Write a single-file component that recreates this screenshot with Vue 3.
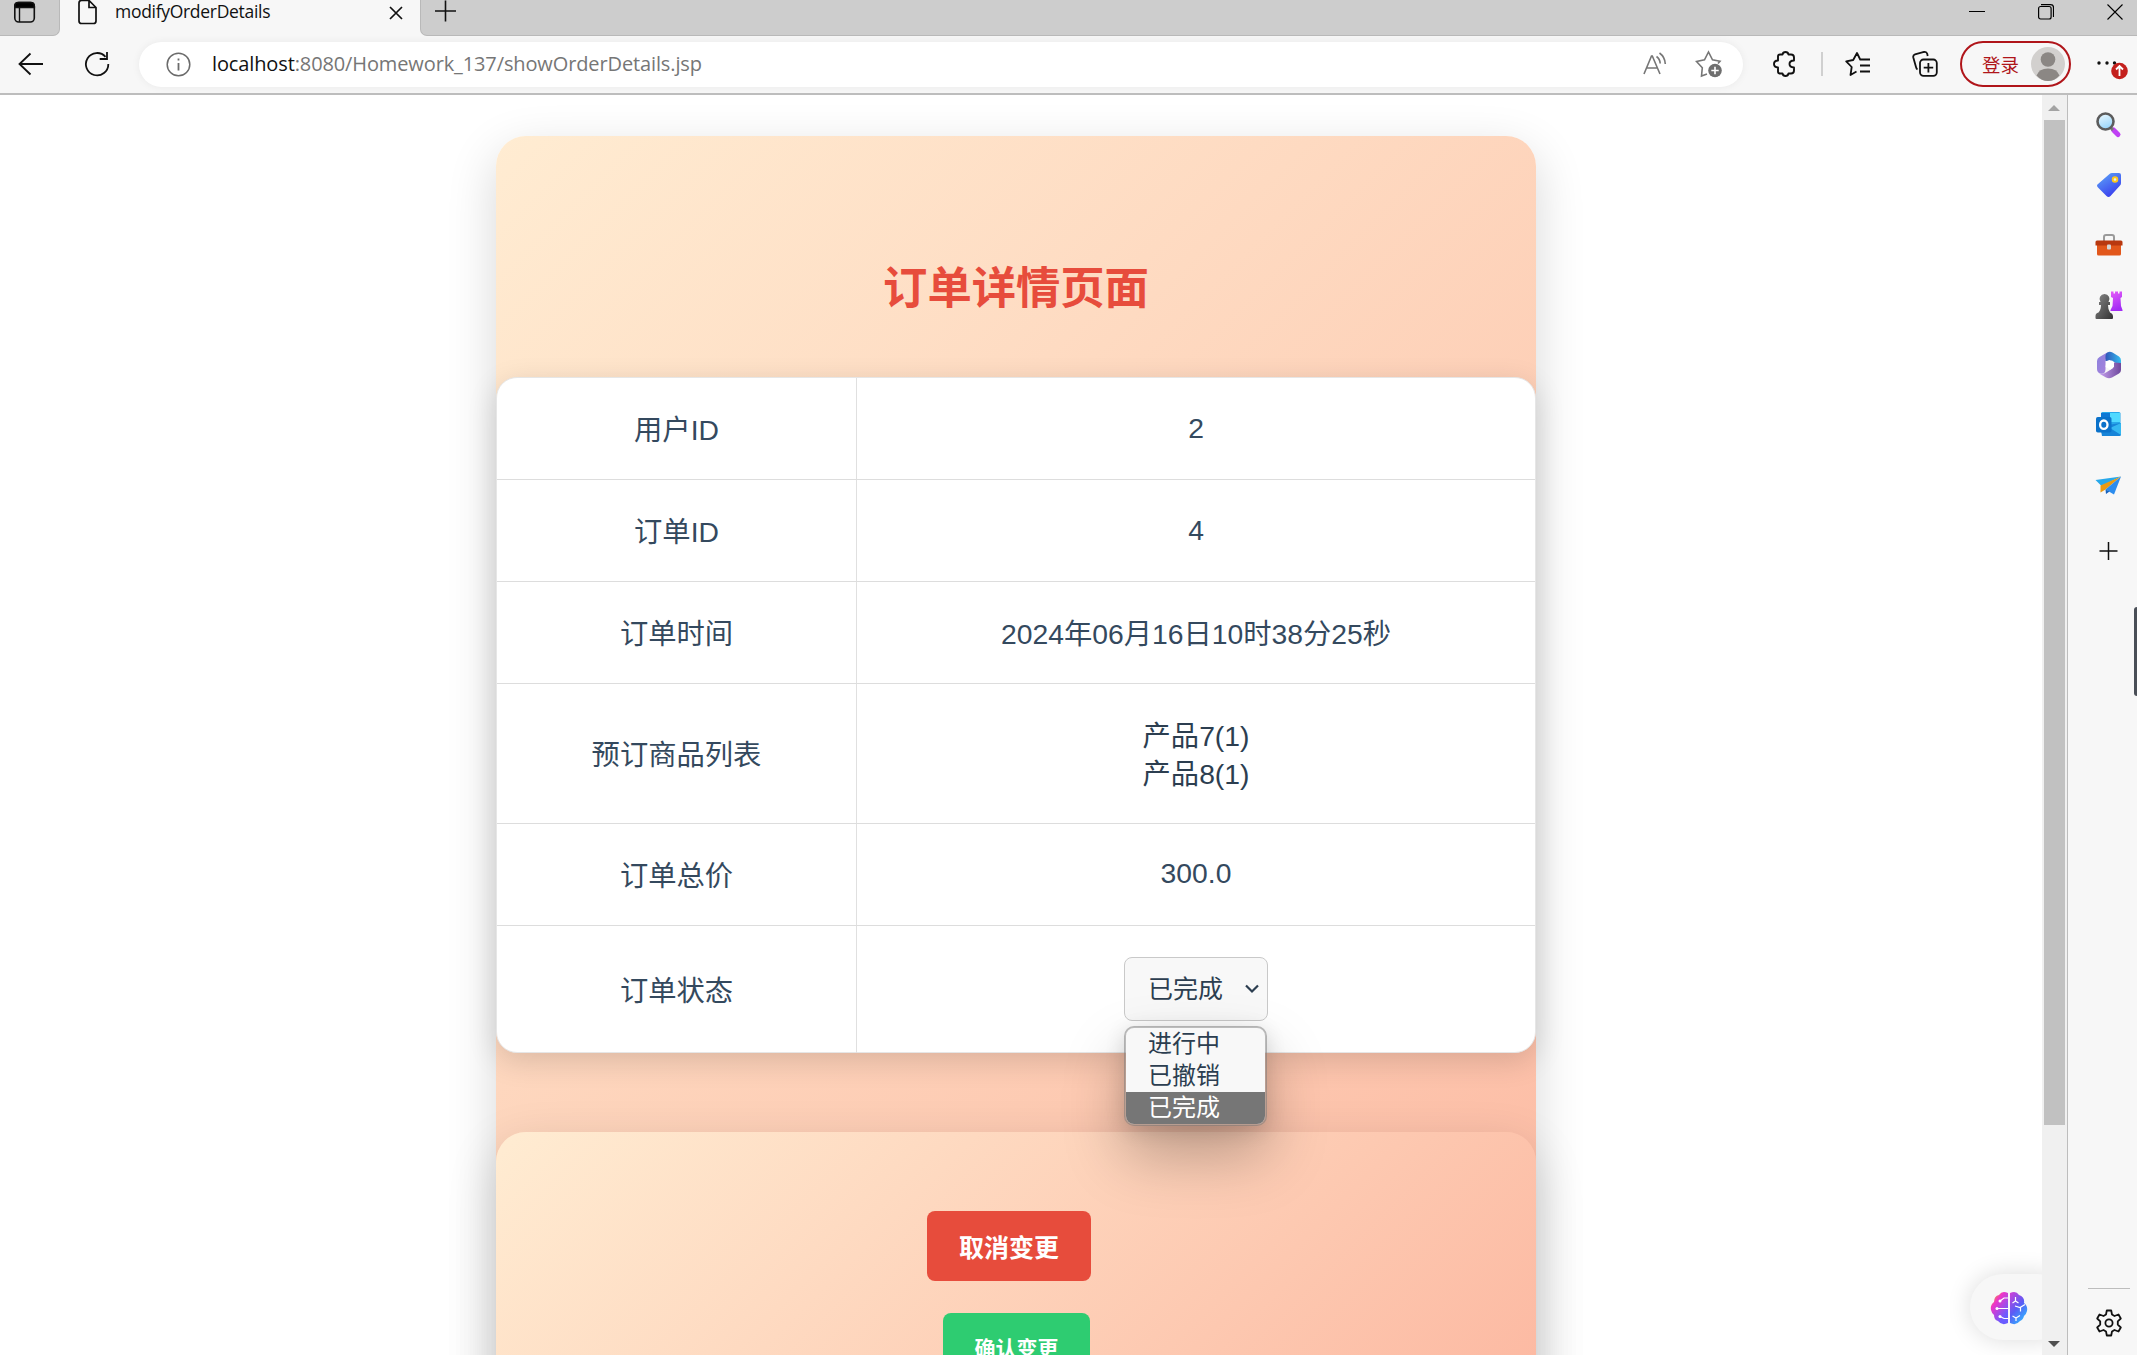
<script setup>
const rows = [
  { label: '用户ID', values: ['2'], kind: 'first num' },
  { label: '订单ID', values: ['4'], kind: 'num' },
  { label: '订单时间', values: ['2024年06月16日10时38分25秒'], kind: '' },
  { label: '预订商品列表', values: ['产品7(1)', '产品8(1)'], kind: 'goods' },
  { label: '订单总价', values: ['300.0'], kind: 'num' },
]
const options = ['进行中', '已撤销', '已完成']
const selected = '已完成'
</script>

<template>
  <div class="window">
    <header class="tabs">
      <div class="tab-menu">
        <svg width="24" height="26" viewBox="0 0 24 26" fill="none" stroke="#111" stroke-width="1.600"><rect x="1.800" y="2.500" width="19.500" height="19.500" rx="4" /><path d="M1.800 7.500V6q0-3.500 3.500-3.500h12.500q3.500 0 3.500 3.500v1.500z" fill="#000" /><path d="M6.500 8v14" stroke-width="1.400" /></svg>
      </div>
      <div class="tab">
        <svg class="doc" width="20" height="26" viewBox="0 0 20 26" fill="none" stroke="#111" stroke-width="1.700"><path d="M4 .5h7l7 7v13.500q0 2.500-2.500 2.500h-12Q1 23.500 1 21V3Q1 .5 3.500 .5zM11 .5v7h7" /></svg>
        <span class="tab-title">modifyOrderDetails</span>
        <svg class="close" width="14" height="14" viewBox="0 0 14 14" stroke="#111" stroke-width="1.700"><path d="M1 1l12 12M13 1L1 13" /></svg>
      </div>
      <svg class="new" width="22" height="22" viewBox="0 0 22 22" stroke="#111" stroke-width="1.600"><path d="M11 0.500v21M0.500 11h21" /></svg>
      <div class="controls">
        <svg width="16" height="16" viewBox="0 0 16 16" stroke="#000" stroke-width="1"><path d="M0 7.500h16" /></svg>
        <svg width="16" height="16" viewBox="0 0 16 16" fill="none" stroke="#000" stroke-width="1.200"><rect x="0.600" y="2.500" width="12.500" height="12.500" rx="2" /><path d="M3 .6h9.500q3 0 3 3V13" /></svg>
        <svg width="16" height="16" viewBox="0 0 16 16" stroke="#000" stroke-width="1.100"><path d="M.5 .5l15 15M15.500 .5l-15 15" /></svg>
      </div>
    </header>

    <div class="toolbar">
      <svg class="back" width="26" height="24" viewBox="0 0 26 24" fill="none" stroke="#111" stroke-width="1.800"><path d="M12.500 1.500L1.500 12l11 10.500M1.500 12H25" /></svg>
      <svg class="reload" width="26" height="26" viewBox="0 0 26 26" fill="none" stroke="#111" stroke-width="1.800"><path d="M21.500 5.800A11.200 11.200 0 1 0 24.300 13M23 1v7h-7.300" /></svg>
      <div class="address">
        <svg width="25" height="25" viewBox="0 0 25 25" fill="none" stroke="#6b6b6b" stroke-width="1.500"><circle cx="12.500" cy="12.500" r="11.300" /><path d="M12.500 11v7.500M12.500 6.500v2" stroke-width="1.800" /></svg>
        <span class="url"><b>localhost</b>:8080/Homework_137/showOrderDetails.jsp</span>
        <svg class="read" width="24" height="24" viewBox="0 0 24 24" fill="none" stroke="#767676" stroke-width="1.600"><path d="M1 22L8.500 4h.8L17 22M3.800 16h10.500M13.500 4.500q3.500 2.500 3.700 7M16.500 1q5.500 4 5.800 11" /></svg>
        <svg width="28" height="28" viewBox="0 0 28 28" fill="none" stroke="#767676" stroke-width="1.600"><path d="M12 24l-5.500 2 .8-8.200L1.500 11.500l8-1.600L13.500 2l4 7.900 7.500 1.400-2 2.300" /><circle cx="20" cy="20.500" r="6.800" fill="#6e6e6e" stroke="none" /><path d="M20 16.800v7.400M16.300 20.500h7.400" stroke="#fff" /></svg>
      </div>
      <svg class="puzzle" width="24" height="26" viewBox="0 0 24 26" fill="none" stroke="#111" stroke-width="1.900" stroke-linejoin="round"><path d="M5 5.500q0-2 2-2h2.500Q10 1 12.500 1t3 2.500H18q3 0 3 3V9.500q-4.500.2-4.500 3.500t4.500 3.500v3q0 3-3 3h-2.500Q15 25 12.500 25t-3-2.500H7q-2 0-2-2V16.500q-4-.2-4-3.500t4-3.500z" /></svg>
      <i class="sep"></i>
      <svg class="fav" width="26" height="26" viewBox="0 0 26 26" fill="none" stroke="#111" stroke-width="1.800" stroke-linejoin="round"><path d="M11.500 20.500L5.500 24l1.200-8L1.200 10.300l7-1.300L12 2l3.200 6.500H25M15 14.500h10M15 20.500h10" /></svg>
      <svg class="coll" width="26" height="26" viewBox="0 0 26 26" fill="none" stroke="#111" stroke-width="1.800"><path d="M5.500 18.500q-1-.5-1.500-2.500L1.300 6.500Q.8 4 3 3.300L12 1q2.500-.5 3.200 1.800l.5 2.200" /><rect x="8" y="8.500" width="16.800" height="16.300" rx="3.500" /><path d="M16.400 12v9.500M11.700 16.700h9.500" /></svg>
      <div class="login">
        <span>登录</span>
        <svg width="34" height="34" viewBox="0 0 34 34"><circle cx="17" cy="17" r="17" fill="#d2d0ce" /><circle cx="17" cy="12.500" r="7.300" fill="#8b8784" /><path d="M5.500 28.500q2.500-7 11.500-7t11.500 7Q23.500 34 17 34T5.500 28.500z" fill="#8b8784" /></svg>
      </div>
      <svg class="more" width="32" height="28" viewBox="0 0 32 28"><g fill="#111"><circle cx="3" cy="9" r="1.700" /><circle cx="11" cy="9" r="1.700" /><circle cx="18.500" cy="9" r="1.700" /></g><circle cx="23.500" cy="17" r="8.300" fill="#c4201d" /><path d="M23.500 22v-9.500M20 15.500l3.500-3.500 3.500 3.500" fill="none" stroke="#fff" stroke-width="1.800" /></svg>
    </div>

    <div class="body">
      <main class="page">
        <section class="card outer">
          <h1>订单详情页面</h1>
          <div class="table">
            <div v-for="r in rows" :key="r.label" class="row" :class="r.kind">
              <div class="cell label">{{ r.label }}</div>
              <div class="cell value"><span v-for="v in r.values" :key="v">{{ v }}</span></div>
            </div>
            <div class="row status">
              <div class="cell label">订单状态</div>
              <div class="cell value">
                <div class="select">
                  <span>{{ selected }}</span>
                  <svg width="16" height="10" viewBox="0 0 16 10" fill="none" stroke="#2c3e50" stroke-width="2.200"><path d="M2 1.500l6 6 6-6" /></svg>
                  <ul class="menu">
                    <li v-for="o in options" :key="o" :class="{ on: o === selected }">{{ o }}</li>
                  </ul>
                </div>
              </div>
            </div>
          </div>
          <section class="card inner">
            <div class="buttons">
              <button class="cancel">取消变更</button>
              <button class="confirm">确认变更</button>
            </div>
          </section>
        </section>
        <div class="brain">
          <svg width="38" height="34" viewBox="0 0 38 34">
            <defs>
              <linearGradient id="bl" x1="0" y1="0" x2=".7" y2="1"><stop offset=".1" stop-color="#f5a623" /><stop offset=".35" stop-color="#ee35c8" /><stop offset=".9" stop-color="#6a5cff" /></linearGradient>
              <linearGradient id="br" x1="0" y1="0" x2=".6" y2="1"><stop offset="0" stop-color="#d43fd6" /><stop offset=".55" stop-color="#5a5cf5" /><stop offset="1" stop-color="#33b0ff" /></linearGradient>
            </defs>
            <path d="M18 2q-6-3-9 2-5 1-5 7-4 3-3 8 1 4 3 5 0 5 4 6 4 5 10 2z" fill="url(#bl)" />
            <path d="M20 2q6-3 9 2 6 2 5 8 4 3 3 8-1 4-3 5-1 4-4 5-4 5-10 2z" fill="url(#br)" />
            <g fill="none" stroke="#fff" stroke-width="1.200"><path d="M18 7h-4l-4 3M18 17.500H7M18 27.500h-4l-4-2M25.500 6v4l-3 2M25.500 10l3 2M25 15l5 1.500 5-3M30.500 16.500v4M22.500 25l3.500 2 4-2.500M26 27v3" /></g>
            <g fill="#fff"><circle cx="10" cy="10" r="1.500" /><circle cx="7" cy="17.500" r="1.500" /><circle cx="10" cy="25.500" r="1.500" /></g>
          </svg>
        </div>
      </main>
      <div class="scroll">
        <i class="up"></i>
        <i class="thumb"></i>
        <i class="down"></i>
      </div>
      <aside class="side">
        <svg viewBox="0 0 28 28"><defs><linearGradient id="lens" x2=".4" y2="1"><stop stop-color="#f1fbff" /><stop offset="1" stop-color="#9bd6fa" /></linearGradient></defs><path d="M18.500 19l4.500 4.500" stroke="#c040f5" stroke-width="5" stroke-linecap="round" /><path d="M15.500 16.500l2.500 2.500" stroke="#777" stroke-width="3" /><circle cx="10.500" cy="10.500" r="8" fill="url(#lens)" stroke="#5c5c5c" stroke-width="2.600" /></svg>
        <svg viewBox="0 0 28 28"><defs><linearGradient id="tag" x2=".6" y2="1"><stop stop-color="#5eaaf8" /><stop offset="1" stop-color="#3a3fee" /></linearGradient></defs><path d="M3 13L14.500 3q1-1 2.500-1h7q2 0 2 2v8q0 1.500-1 2.500l-9.500 10.500q-2 2-4 0l-8.500-8.500q-2-2 0-3.500z" fill="url(#tag)" /><circle cx="20" cy="8.500" r="2.300" fill="#e8eefc" stroke="#ffc91a" stroke-width="1.900" /></svg>
        <svg viewBox="0 0 28 28"><path d="M9 10V6q0-2 2-2h6q2 0 2 2v4" fill="none" stroke="#9a9a9a" stroke-width="2" /><path d="M2 13h24v10q0 1.500-1.500 1.500h-21Q2 24.500 2 23z" fill="#e2571b" /><path d="M.5 11q0-1.500 1.500-1.500h24q1.500 0 1.500 1.500v3.500H.5z" fill="#b8380f" /><rect x="12" y="13.500" width="4" height="5" rx="1" fill="#d5d5d5" /></svg>
        <svg viewBox="0 0 28 28"><defs><linearGradient id="rook" x2=".3" y2="1"><stop stop-color="#e65cf8" /><stop offset="1" stop-color="#a32cf5" /></linearGradient><linearGradient id="pawn" y2="1"><stop stop-color="#888" /><stop offset="1" stop-color="#333" /></linearGradient></defs><path d="M16 .5h2.500v2H20v-2h3v2h1.500v-2H27V6l-1.500 1 .5 8 1.500 4v1H15.500v-1l2-4 .5-8-2-1z" fill="url(#rook)" /><path d="M9.500 3a5 5 0 0 1 4 8h1.500v3h-2q0 5 2 7.500 3 1 3 4v1.500q0 1-1 1H1.500q-1 0-1-1V25q0-3 3-3.500Q6 19 6 14H4v-3h1.500a5 5 0 0 1 4-8z" fill="url(#pawn)" /></svg>
        <svg viewBox="0 0 28 28"><defs><linearGradient id="m1" y2="1"><stop stop-color="#8a80dd" /><stop offset="1" stop-color="#a983db" /></linearGradient><linearGradient id="m2" x2="1"><stop stop-color="#2f55b8" /><stop offset="1" stop-color="#35bdf0" /></linearGradient><linearGradient id="m3" x2="1"><stop stop-color="#c8a2f0" /><stop offset="1" stop-color="#6e489c" /></linearGradient></defs><path d="M13 1L4.500 6Q2 7.500 2 10v8q0 3 3 4.500 5 1.500 5.500-4V9z" fill="url(#m1)" /><path d="M10.500 10V5q0-3 3-4 2-.5 4 .5L24 5.500q2 1.500 2 4V18q-.5-3-4-5l-5-3.500z" fill="url(#m2)" /><path d="M26 12v7q0 2-2 3.500l-7 4q-3 1.500-6 0L4 22.500q4 1 7-1l6.500-4q1.500-1 1.500-6z" fill="url(#m3)" /><path d="M11.500 10.200l3-1.200 4.500 2.500v4.300L15.500 18.500l-5-2.500z" fill="#fff" /></svg>
        <svg viewBox="0 0 28 28"><path d="M6 2.500Q6 1 7.500 1H24q1.500 0 1.500 1.500V16H6z" fill="#28a8ea" /><path d="M15 2h10v9H15z" fill="#50d9ff" /><path d="M6 2h9v8H6z" fill="#0f78d4" /><path d="M5 15l21-3v11.500q0 1.500-1.500 1.500H7z" fill="#1784d8" /><path d="M26 12v12L15 17z" fill="#35b8f1" /><rect x="1" y="6" width="15.500" height="15.500" rx="1.800" fill="#0b72ca" /><ellipse cx="8.800" cy="13.700" rx="3.700" ry="4.200" fill="none" stroke="#fff" stroke-width="2.300" /></svg>
        <svg viewBox="0 0 28 28"><path d="M.5 8L26 4.500 6.500 14z" fill="#28a8ea" /><path d="M26 4.500L5.500 13.500v7l5-3z" fill="#e99a12" /><path d="M26 4.500L19 22.500l-8.500-5z" fill="#2b8cee" /><path d="M10.500 17.500l.5 4.500 3.500-2.500z" fill="#1762bd" /></svg>
        <svg class="plus" viewBox="0 0 28 28" stroke="#111" stroke-width="1.500"><path d="M13.500 5v18M4.500 14h18" /></svg>
        <i class="rule"></i>
        <svg class="gear" viewBox="0 0 28 28" fill="none" stroke="#111" stroke-width="1.800" stroke-linejoin="round"><path d="M11.800 1.500h4.400l.8 4 2.500 1.500 4-1.500 2.300 4-3 2.800v3.400l3 2.800-2.300 4-4-1.500L17 22.500l-.8 4h-4.400l-.8-4L8.500 21l-4 1.500-2.300-4 3-2.800v-3.400l-3-2.800 2.300-4 4 1.500L11 5.500z" /><circle cx="14" cy="14" r="3.600" /></svg>
        <i class="handle"></i>
      </aside>
    </div>
  </div>
</template>

<style>
html,
body {
  margin: 0;
  overflow: hidden;
}
</style>

<style scoped>
* {
  box-sizing: border-box;
}
svg {
  display: block;
  flex: none;
}
.window {
  width: 2137px;
  height: 1355px;
  display: flex;
  flex-direction: column;
  overflow: hidden;
  background: #f7f7f7;
  font-family: 'Liberation Sans', 'Noto Sans CJK SC', sans-serif;
}
.tabs {
  height: 36px;
  display: flex;
  background: #f7f7f7;
}
.tab-menu {
  width: 60px;
  padding-left: 13px;
  background: #cdcdcd;
  border-bottom: 1px solid #b9b9b9;
  border-right: 1px solid #b9b9b9;
  border-bottom-right-radius: 7px;
}
.tab {
  width: 360px;
  display: flex;
  align-items: flex-start;
  padding-left: 18px;
}
.tab-title {
  width: 273px;
  margin: -2px 0 0 17px;
  font: 17.500px/26px 'Open Sans', 'Noto Sans', sans-serif;
  letter-spacing: -0.300px;
  color: #111;
  white-space: nowrap;
}
.close {
  margin-top: 6px;
  margin-left: 1px;
}
.new {
  width: 52px;
  height: 36px;
  background: #cdcdcd;
  border-bottom: 1px solid #b9b9b9;
  border-left: 1px solid #b9b9b9;
  border-bottom-left-radius: 7px;
  padding: 0 15px 13px 13px;
}
.controls {
  flex: 1;
  display: flex;
  justify-content: flex-end;
  gap: 53px;
  padding: 4px 14px 0 0;
  background: #cdcdcd;
  border-bottom: 1px solid #b9b9b9;
}
.toolbar {
  height: 59px;
  display: flex;
  align-items: center;
  padding: 0 2px 1px 18px;
  border-bottom: 2px solid #bdbdbd;
}
.reload {
  margin-left: 40px;
}
.address {
  width: 1604px;
  height: 45px;
  margin-left: 29px;
  padding: 0 20px 0 27px;
  display: flex;
  align-items: center;
  border-radius: 23px;
  background: #fff;
  box-shadow: 0 0 9px rgba(0, 0, 0, 0.060);
}
.url {
  margin-left: 21px;
  flex: 1;
  font: 20px/30px 'Open Sans', 'Noto Sans', sans-serif;
  letter-spacing: -0.120px;
  color: #767676;
}
.url b {
  font-weight: 400;
  color: #111;
}
.read {
  margin-right: 28px;
}
.puzzle {
  margin-left: 30px;
}
.sep {
  width: 2px;
  height: 24px;
  margin-left: 24px;
  background: #d0d0d0;
}
.fav {
  margin-left: 22px;
}
.coll {
  margin-left: 41px;
}
.login {
  width: 111px;
  height: 46px;
  margin-left: 22px;
  padding: 0 4px 0 20px;
  display: flex;
  align-items: center;
  justify-content: space-between;
  border: 2px solid #b0151a;
  border-radius: 23px;
  font: 18.500px/28px 'Noto Sans CJK SC', sans-serif;
  color: #b0151a;
}
.more {
  margin: 7px 0 0 25px;
}
.body {
  height: 1260px;
  display: flex;
}
.page {
  width: 2042px;
  position: relative;
  overflow: hidden;
  padding: 41px 0 0 496px;
  background: #fff;
}
.card {
  width: 1040px;
  padding-top: 79px;
  border-radius: 30px;
  background: linear-gradient(135deg, #ffecd2, #fcb69f);
  box-shadow: 0 16px 50px rgba(0, 0, 0, 0.160);
}
.outer {
  height: 1407px;
}
.inner {
  height: 331px;
  margin-top: 79px;
}
h1 {
  height: 113px;
  margin: 0 0 49px;
  font: 700 44.300px/141px 'Noto Sans CJK SC', sans-serif;
  text-align: center;
  color: #e74c3c;
}
.table {
  height: 676px;
  border: 1px solid #e6e6e6;
  border-radius: 21px;
  background: #fff;
  box-shadow: 0 8px 30px rgba(0, 0, 0, 0.140);
  font-size: 28.300px;
  line-height: 38px;
  color: #34495e;
}
.row {
  display: flex;
  height: 102px;
}
.row.first {
  height: 101px;
}
.row.goods {
  height: 139.500px;
}
.row.status {
  height: 128px;
}
.row + .row {
  border-top: 1px solid #ddd;
}
.cell {
  display: flex;
  flex-direction: column;
  align-items: center;
  justify-content: center;
  padding-top: 3px;
}
.label {
  width: 359px;
}
.value {
  flex: 1;
  border-left: 1px solid #e0e0e0;
}
.num .value {
  padding: 0 0 2px;
}
.goods .value {
  color: #2c3e50;
}
.status .value {
  padding: 0;
}
.select {
  position: relative;
  width: 144px;
  height: 64px;
  padding: 0 7px 0 23px;
  display: flex;
  align-items: center;
  justify-content: space-between;
  border: 1px solid #c9c9c9;
  border-radius: 8px;
  background: #f8f8f8;
  font-size: 25px;
  color: #2c3e50;
}
.menu {
  position: absolute;
  left: -1px;
  top: 68px;
  width: 143px;
  margin: 0;
  padding: 0;
  overflow: hidden;
  list-style: none;
  border: 2px solid rgba(120, 120, 120, 0.500);
  border-radius: 10px;
  background: #f8f8f8;
  background-clip: padding-box;
  box-shadow: 0 30px 60px rgba(0, 0, 0, 0.260), 0 4px 20px rgba(0, 0, 0, 0.120);
  font-size: 24px;
  line-height: 32px;
  z-index: 2;
}
.menu li {
  padding-left: 22px;
}
.menu .on {
  background: #767676;
  color: #fff;
}
.buttons {
  display: flex;
  flex-direction: column;
  align-items: flex-end;
  padding-right: 445px;
}
button {
  height: 70px;
  padding: 0;
  border: 0;
  border-radius: 8px;
  color: #fff;
  font: 700 25px/36px 'Noto Sans CJK SC', sans-serif;
}
.cancel {
  width: 164px;
  background: #e74c3c;
}
.confirm {
  width: 147px;
  margin: 32px 1px 0 0;
  padding-bottom: 2px;
  background: #2ecc71;
  font-size: 21px;
  line-height: 24px;
}
.brain {
  position: absolute;
  left: 1970px;
  top: 1179px;
  width: 100px;
  height: 66px;
  padding: 17px 20px;
  border-radius: 33px;
  background: #f7f7f7;
  box-shadow: 0 0 24px rgba(0, 0, 0, 0.140);
}
.scroll {
  width: 26px;
  display: flex;
  flex-direction: column;
  align-items: center;
  padding: 10px 1px 8px 0;
  background: #f0f0f0;
  border-right: 1px solid #bdbdbd;
}
.up,
.down {
  border: 6px solid transparent;
  border-top: 0;
  border-bottom-color: #a3a3a3;
}
.down {
  margin-top: auto;
  border-top: 6px solid #505050;
  border-bottom: 0;
}
.thumb {
  width: 21px;
  height: 1005px;
  margin-top: 9px;
  background: #c1c1c1;
}
.side {
  position: relative;
  flex: 1;
  display: flex;
  flex-direction: column;
  align-items: center;
  padding: 16px 0 0 13px;
}
.side svg {
  width: 28px;
  height: 28px;
  margin-bottom: 32.100px;
}
.side .plus {
  margin-top: 5px;
}
.side .rule {
  width: 42px;
  height: 1px;
  margin-top: auto;
  background: #bdbdbd;
}
.side .gear {
  margin: 20px 0 18px;
}
.handle {
  position: absolute;
  right: -3px;
  top: 512px;
  width: 6px;
  height: 89px;
  border-radius: 3px;
  background: #4a4f57;
}
</style>
